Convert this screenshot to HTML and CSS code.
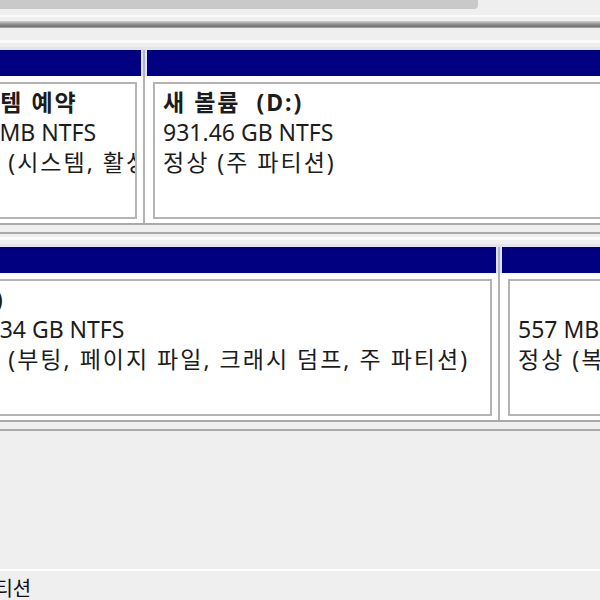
FILE: index.html
```html
<!DOCTYPE html>
<html lang="ko">
<head>
<meta charset="utf-8">
<title>디스크 관리</title>
<link rel="stylesheet" href="styles.css">
</head>
<body>
<div class="top">
  <div class="thumb"></div>
  <div class="rule-light"></div>
  <div class="rule-dark"></div>
  <div class="rule-light second"></div>
</div>

<div class="disk-gap"></div>
<div class="disk">
  <div class="part sys">
    <div class="head"></div>
    <div class="body">
      <div class="panel">
        <div class="line name ko">시스템 예약</div>
        <div class="line">549 MB NTFS</div>
        <div class="line ko">정상 (시스템, 활성, 주 파티션)</div>
      </div>
    </div>
  </div>
  <div class="split"></div>
  <div class="part grow">
    <div class="head"></div>
    <div class="body">
      <div class="panel">
        <div class="line name ko">새 볼륨&nbsp; (D:)</div>
        <div class="line">931.46 GB NTFS</div>
        <div class="line ko">정상 (주 파티션)</div>
      </div>
    </div>
  </div>
</div>
<div class="disk-foot"></div>

<div class="disk-gap second"></div>
<div class="disk">
  <div class="part win">
    <div class="head"></div>
    <div class="body">
      <div class="panel">
        <div class="line name">&nbsp;&nbsp;(C:)</div>
        <div class="line">465.34 GB NTFS</div>
        <div class="line ko">정상 (부팅, 페이지 파일, 크래시 덤프, 주 파티션)</div>
      </div>
    </div>
  </div>
  <div class="split"></div>
  <div class="part grow">
    <div class="head"></div>
    <div class="body">
      <div class="panel">
        <div class="line name">&nbsp;</div>
        <div class="line">557 MB</div>
        <div class="line ko">정상 (복구 파티션)</div>
      </div>
    </div>
  </div>
</div>
<div class="disk-foot"></div>

<div class="empty"></div>
<div class="legend">
  <span class="legend-text">주 파티션</span>
</div>
</body>
</html>
```

FILE: styles.css
```css
html, body {
  margin: 0;
  padding: 0;
}
body {
  width: 600px;
  height: 600px;
  overflow: hidden;
  background: #efefef;
  font-family: "Noto Sans", "Noto Sans CJK KR", sans-serif;
  color: #1c1c1c;
}

.top {
  height: 43px;
}
.thumb {
  width: 478px;
  height: 9px;
  background: #c9c9c9;
  border-bottom-right-radius: 4px;
}
.rule-light {
  margin-top: 6px;
  height: 2px;
  background: #fbfbfb;
}
.rule-dark {
  margin-top: 4px;
  height: 7px;
  background: linear-gradient(#cfcfcf, #9a9a9a 40%, #6f6f6f 75%, #b0b0b0);
}
.rule-light.second {
  margin-top: 12px;
  height: 3px;
}

.disk-gap {
  height: 4px;
}
.disk-gap.second {
  height: 10px;
  background: linear-gradient(#efefef 0 3px, #fbfbfb 3px 6px, #efefef 6px);
}

.disk {
  display: flex;
  width: 724px;
  margin-left: -62px;
  border-top: 3px solid #e3e3f3;
  background: #fff;
}
.part {
  display: flex;
  flex-direction: column;
  flex-shrink: 0;
}
.part.sys { width: 203px; }
.part.win { width: 558px; }
.part.grow { flex: 1 1 0; min-width: 0; }

.head {
  height: 26px;
  background: #000080;
}
.body {
  padding: 6px 4px 4px 6px;
}
.panel {
  height: 137px;
  box-sizing: border-box;
  border: 2px solid #b4b4b4;
  background: #fff;
  padding: 3px 8px 0;
  overflow: hidden;
}
.line {
  font-size: 23px;
  line-height: 30px;
  white-space: nowrap;
}
.line.ko {
  letter-spacing: 2px;
}
.line.name {
  font-weight: 700;
}

.split {
  width: 6px;
  flex-shrink: 0;
  background:
    linear-gradient(90deg, #dfe3f3 0 2px, #aeb3cf 2px 4px, #dfe3f3 4px) top / 100% 26px no-repeat,
    linear-gradient(90deg, #fdfdfd 0 2px, #b3b3b3 2px 4px, #fdfdfd 4px);
}

.disk-foot {
  height: 7px;
  border-top: 2px solid #a9a9a9;
  border-bottom: 2px solid #a9a9a9;
  background: #efefef;
}

.empty {
  height: 138px;
  border-bottom: 2px solid #fdfdfd;
}
.legend {
  padding-top: 4px;
}
.legend-text {
  display: inline-block;
  margin-left: -48px;
  font-family: "Noto Sans CJK KR", sans-serif;
  font-size: 20px;
  line-height: 26px;
  color: #111;
}
```
